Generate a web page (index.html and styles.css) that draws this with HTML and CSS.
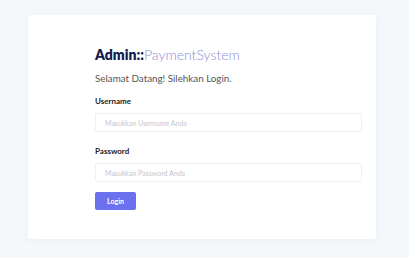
FILE: index.html
```html
<!doctype html>
<html lang="id">
<head>
    <meta charset="UTF-8">
    <meta name="viewport" content="width=device-width, initial-scale=1.0">
    <title>Admin Login</title>
    <link rel="stylesheet" href="styles.css">
</head>
<body>
<div class="wrap">
    <div class="card">
        <div class="content">
            <h1 class="brand"><b>Admin::</b><span>PaymentSystem</span></h1>
            <p class="welcome">Selamat Datang! Silehkan Login.</p>
            <form class="form" action="javascript:;">
                <label class="label" for="username">Username</label>
                <input class="input" type="text" id="username" placeholder="Masukkan Username Anda">
                <label class="label" for="password">Password</label>
                <input class="input" type="password" id="password" placeholder="Masukkan Password Anda">
                <button class="btn" type="submit">Login</button>
            </form>
        </div>
    </div>
</div>
</body>
</html>
```

FILE: styles.css
```css
* {
    margin: 0;
    padding: 0;
    box-sizing: border-box;
}

body {
    background: #f5f8fb;
    font-family: "Lato", "Noto Sans", sans-serif;
    color: #333;
}

.wrap {
    padding: 15px 33px 19px 28px;
}

.card {
    background: #fff;
    height: 224px;
    box-shadow: 0 1px 6px rgba(40, 60, 100, 0.06);
    padding: 31px 14px 0 67px;
}

.brand {
    font-size: 14px;
    line-height: 18px;
    font-weight: 400;
}

.brand b {
    font-weight: 800;
    color: #141b4d;
}

.brand span {
    font-weight: 300;
    color: #8c90d4;
}

.welcome {
    margin-top: 8px;
    font-size: 9.8px;
    line-height: 12px;
    color: #555;
}

.form {
    display: flex;
    flex-direction: column;
    align-items: flex-start;
    margin-top: 12px;
}

.label {
    font-size: 8px;
    line-height: 10px;
    font-weight: 700;
    color: #222;
}

.input {
    width: 100%;
    height: 19px;
    margin-top: 7px;
    margin-bottom: 14px;
    border: 1px solid #eef0f3;
    border-radius: 2px;
    padding: 0 9px;
    font-family: inherit;
    font-size: 7px;
    color: #333;
    outline: none;
}

.input::placeholder {
    color: #c4c6cc;
}

.btn {
    margin-top: -4px;
    width: 41px;
    height: 18px;
    border: none;
    border-radius: 2px;
    background: #6b70ee;
    color: #fff;
    font-family: inherit;
    font-size: 7px;
    font-weight: 700;
}
```
